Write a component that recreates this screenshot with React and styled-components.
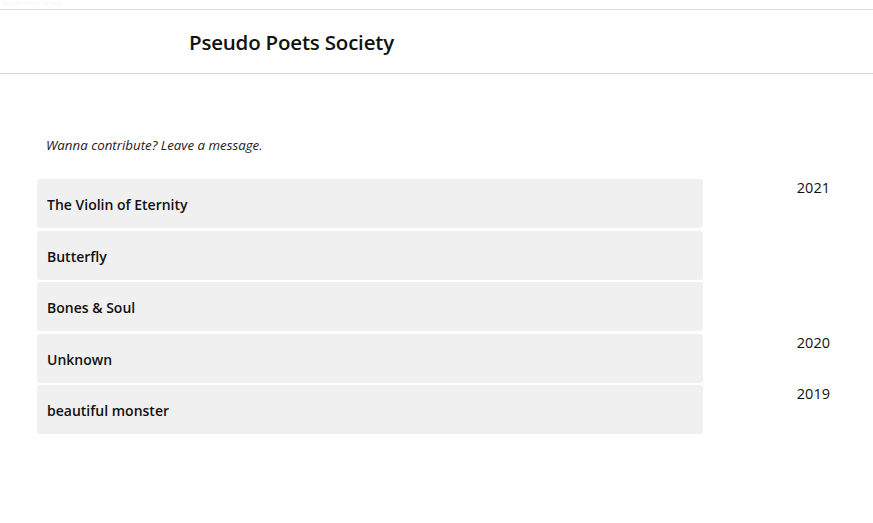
import React from "react"
import styled, { createGlobalStyle } from "styled-components"

const GlobalStyle = createGlobalStyle`
  *, *::before, *::after {
    box-sizing: border-box;
  }
  body {
    margin: 0;
    background: #fff;
    font-family: "Open Sans", "Liberation Sans", sans-serif;
    color: #111;
  }
`

const TopStrip = styled.div`
  height: 10px;
  border-bottom: 1px solid #dcdcdc;
  overflow: hidden;
  font-size: 6px;
  line-height: 7px;
  color: #f3f3f3;
  padding-left: 2px;
`

const Header = styled.header`
  height: 64px;
  display: flex;
  align-items: center;
  padding-left: 189px;
  border-bottom: 1px solid #d6d6d6;
`

const Title = styled.h1`
  margin: 0;
  font-size: 20.5px;
  font-weight: 600;
  letter-spacing: -0.2px;
  color: #111;
`

const Main = styled.main`
  padding: 62px 43px 0 37px;
`

const Note = styled.p`
  margin: 0 0 25px 9px;
  font-size: 13.3px;
  line-height: 18px;
  font-style: italic;
  color: #222;
`

const List = styled.div`
  display: grid;
  grid-template-columns: 666px 1fr;
  row-gap: 2.5px;
`

const Poem = styled.div`
  height: 49px;
  display: flex;
  align-items: center;
  padding: 2px 10px 0;
  background: #f0f0f0;
  border-radius: 3px;
  font-size: 14px;
  font-weight: 600;
  color: #111;
`

const Year = styled.div`
  text-align: right;
  font-size: 14.5px;
  line-height: 18px;
  color: #111;
`

const poems = [
  { title: "The Violin of Eternity", year: "2021" },
  { title: "Butterfly" },
  { title: "Bones & Soul" },
  { title: "Unknown", year: "2020" },
  { title: "beautiful monster", year: "2019" },
]

const App = () => (
  <>
    <GlobalStyle />
    <TopStrip>Pseudo Poets Society</TopStrip>
    <Header>
      <Title>Pseudo Poets Society</Title>
    </Header>
    <Main>
      <Note>Wanna contribute? Leave a message.</Note>
      <List>
        {poems.map((p) => (
          <React.Fragment key={p.title}>
            <Poem>{p.title}</Poem>
            <Year>{p.year}</Year>
          </React.Fragment>
        ))}
      </List>
    </Main>
  </>
)

export default App
